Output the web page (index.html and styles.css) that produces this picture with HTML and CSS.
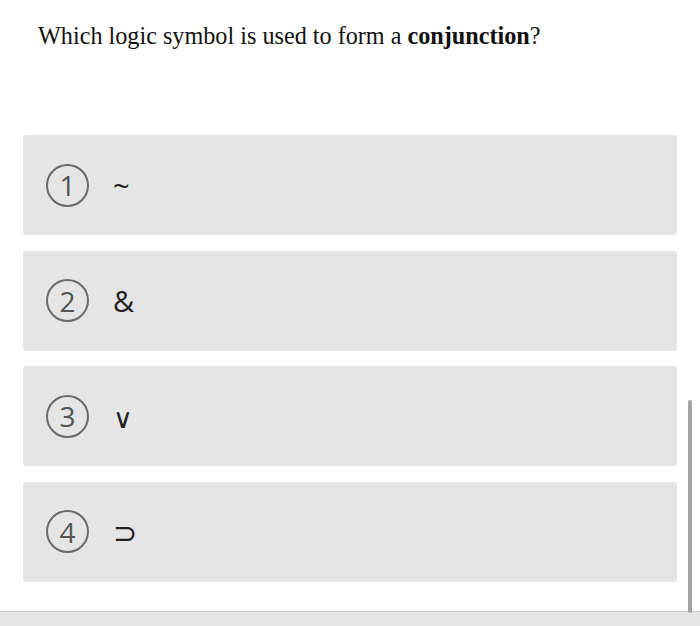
FILE: index.html
```html
<!DOCTYPE html>
<html>
<head>
<meta charset="utf-8">
<link rel="stylesheet" href="styles.css">
</head>
<body>
<div class="page">
  <p class="question">Which logic symbol is used to form a <b>conjunction</b>?</p>
  <div class="options">
    <div class="option"><span class="num">1</span><span class="sym">~</span></div>
    <div class="option"><span class="num">2</span><span class="sym">&amp;</span></div>
    <div class="option"><span class="num">3</span><span class="sym thin">∨</span></div>
    <div class="option"><span class="num">4</span><span class="sym">⊃</span></div>
  </div>
  <div class="bottom"></div>
  <div class="scrollbar"></div>
</div>
</body>
</html>
```

FILE: styles.css
```css
html, body {
  margin: 0;
  padding: 0;
  background: #fff;
}
.page {
  position: relative;
  width: 700px;
  height: 626px;
  overflow: hidden;
  display: flex;
  flex-direction: column;
}
.question {
  margin: 0;
  padding: 22px 0 0 38px;
  font-family: "Liberation Serif", "Times New Roman", serif;
  font-size: 24.2px;
  line-height: 28px;
  color: #111;
}
.options {
  margin-top: 85px;
  padding: 0 23px;
  display: flex;
  flex-direction: column;
  gap: 15.5px;
}
.option {
  height: 100px;
  background: #e5e5e5;
  border-radius: 3px;
  display: flex;
  align-items: center;
  padding-left: 23px;
}
.num {
  box-sizing: border-box;
  width: 43px;
  height: 43px;
  border: 2px solid #6a6a6a;
  border-radius: 50%;
  display: flex;
  align-items: center;
  justify-content: center;
  font-family: "Open Sans", sans-serif;
  font-size: 28px;
  color: #555;
  line-height: 1;
}
.sym {
  margin-left: 24px;
  font-family: "Open Sans", "DejaVu Sans", sans-serif;
  font-size: 29px;
  color: #222;
  line-height: 1;
}
.sym.thin {
  font-family: "DejaVu Sans", sans-serif;
  font-size: 27px;
  font-weight: 200;
  margin-top: 4px;
}
.bottom {
  margin-top: auto;
  height: 14px;
  border-top: 1px solid #cfcfcf;
  background: #e6e6e6;
}
.scrollbar {
  position: absolute;
  right: 8px;
  top: 400px;
  width: 4px;
  height: 213px;
  border-radius: 2px;
  background: #a3a3a3;
}
```
